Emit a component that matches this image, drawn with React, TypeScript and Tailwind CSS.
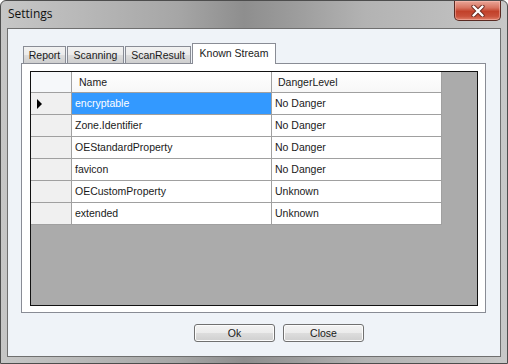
import React from 'react';

const rows = [
  { name: 'encryptable', level: 'No Danger' },
  { name: 'Zone.Identifier', level: 'No Danger' },
  { name: 'OEStandardProperty', level: 'No Danger' },
  { name: 'favicon', level: 'No Danger' },
  { name: 'OECustomProperty', level: 'Unknown' },
  { name: 'extended', level: 'Unknown' },
];

const tabs = [
  { label: 'Report', w: 'w-[43px]' },
  { label: 'Scanning', w: 'w-[57px]' },
  { label: 'ScanResult', w: 'w-[66px]' },
];

function CloseButton() {
  return (
    <div className="w-[47px] h-[20px] mr-[6px] rounded-b-[5px] border border-t-0 border-[#5a2a22] bg-[linear-gradient(180deg,#eaa698_0%,#d87562_35%,#c2412a_55%,#c9503a_80%,#e0806a_100%)] flex items-center justify-center shadow-[inset_0_0_0_1px_rgba(255,200,190,0.45)]">
      <svg width="14" height="12" viewBox="0 0 14 12">
        <path d="M2.5 1.5 L11.5 10.5 M11.5 1.5 L2.5 10.5" stroke="#6b2a20" strokeWidth="4.2" strokeLinecap="round" />
        <path d="M2.5 1.5 L11.5 10.5 M11.5 1.5 L2.5 10.5" stroke="#ffffff" strokeWidth="2.4" strokeLinecap="round" />
      </svg>
    </div>
  );
}

function WinButton({ label }: { label: string }) {
  return (
    <button
      type="button"
      className="w-[81px] h-[18px] rounded-[3px] border border-[#707070] bg-[linear-gradient(180deg,#f3f3f3_0%,#ebebeb_50%,#dddddd_51%,#cfcfcf_100%)] text-[10.5px] leading-none text-[#1a1a1a] flex items-center justify-center shadow-[inset_0_0_0_1px_#fcfcfc]"
    >
      {label}
    </button>
  );
}

export default function App() {
  return (
    <div className="w-[508px] h-[364px] overflow-hidden font-['Liberation_Sans',Arial,sans-serif]">
      <div className="w-[508px] h-[364px] flex flex-col rounded-t-[6px] border border-[#4d4d4d] bg-[linear-gradient(90deg,#c6c6c6_0%,#b9b9b9_15%,#a6a6a6_35%,#8e8e8e_48%,#9c9c9c_58%,#b3b3b3_72%,#bdbdbd_88%,#c8c8c8_100%)]">
        {/* title bar */}
        <div className="h-[27px] flex items-start justify-between">
          <span className="pl-[7px] pt-[6px] text-[12px] leading-[14px] text-[#111] font-['Open_Sans',sans-serif]">
            Settings
          </span>
          <CloseButton />
        </div>

        {/* client area */}
        <div className="mx-[6px] h-[329px] border border-[#6f6f6f] bg-[#eff3f8] flex flex-col">
          <div className="ml-[13px] mt-[14px] w-[465px] flex flex-col">
            {/* tab strip */}
            <div className="h-[20px] flex items-end pl-[2px] relative z-10">
              {tabs.map((t) => (
                <div
                  key={t.label}
                  className={`${t.w} h-[17px] mr-px border border-b-0 border-[#898c95] bg-[linear-gradient(180deg,#f2f2f2_0%,#ebebeb_50%,#dddddd_51%,#cfcfcf_100%)] text-[10.5px] leading-none text-[#1a1a1a] flex items-center justify-center`}
                >
                  {t.label}
                </div>
              ))}
              <div className="w-[84px] h-[21px] -mb-px border border-b-0 border-[#898c95] bg-white text-[10.5px] leading-none text-[#1a1a1a] flex items-center justify-center pb-[2px]">
                Known Stream
              </div>
            </div>

            {/* tab page */}
            <div className="h-[250px] border border-[#898c95] bg-white pl-[8px] pr-[7px] pt-[7px] pb-[6px]">
              <div className="w-[448px] h-[235px] border border-[#111] bg-[#ababab] text-[10.5px] leading-none text-[#1a1a1a]">
                {/* header */}
                <div className="h-[21px] flex">
                  <div className="w-[41px] border-r border-b border-[#a0a0a0] bg-[#f6f8fa]" />
                  <div className="w-[200px] border-r border-b border-[#a0a0a0] bg-[linear-gradient(180deg,#ffffff_0%,#f7f7f7_100%)] pl-[7px] flex items-center">
                    Name
                  </div>
                  <div className="w-[170px] border-r border-b border-[#a0a0a0] bg-[linear-gradient(180deg,#ffffff_0%,#f7f7f7_100%)] pl-[6px] flex items-center">
                    DangerLevel
                  </div>
                </div>
                {rows.map((r, i) => (
                  <div key={r.name} className="h-[22px] flex">
                    <div className="w-[41px] border-r border-b border-[#a0a0a0] bg-[#f0f0f0] flex items-center pl-[6px]">
                      {i === 0 && (
                        <svg width="6" height="10" viewBox="0 0 6 10">
                          <polygon points="0,0 5,5 0,10" fill="#000" />
                        </svg>
                      )}
                    </div>
                    <div
                      className={`w-[200px] border-r border-b border-[#a0a0a0] pl-[3px] flex items-center ${
                        i === 0 ? 'bg-[#3399ff] text-white' : 'bg-white'
                      }`}
                    >
                      {r.name}
                    </div>
                    <div className="w-[170px] border-r border-b border-[#a0a0a0] bg-white pl-[3px] flex items-center">
                      {r.level}
                    </div>
                  </div>
                ))}
              </div>
            </div>
          </div>

          {/* buttons */}
          <div className="mt-[11px] pl-[186px] flex gap-[8px]">
            <WinButton label="Ok" />
            <WinButton label="Close" />
          </div>
        </div>
      </div>
    </div>
  );
}
